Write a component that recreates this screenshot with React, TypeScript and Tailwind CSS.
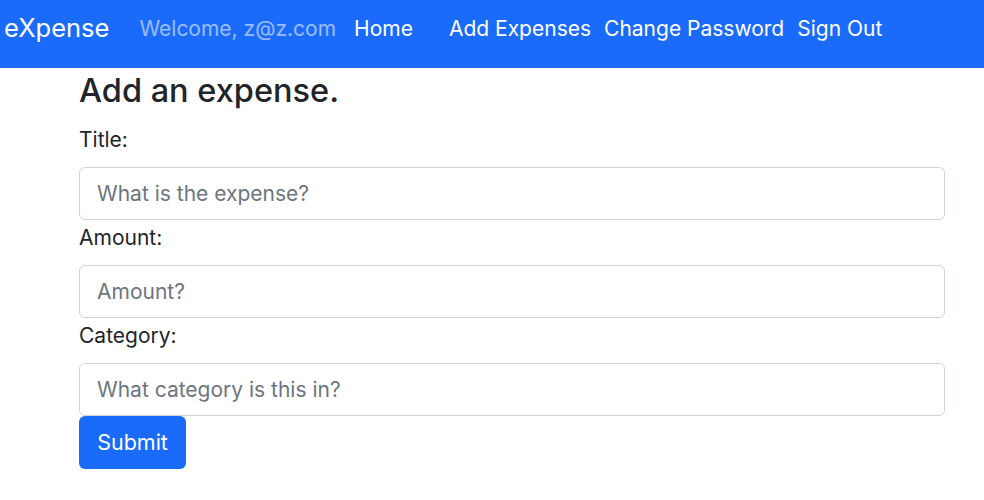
import React from "react";

const font = { fontFamily: "Inter, 'Noto Sans', sans-serif" };

function Field({ label, placeholder }: { label: string; placeholder: string }) {
  return (
    <div>
      <label className="block pt-[3px] text-[21px] leading-[30px] text-[#212529] mb-[12px]">{label}</label>
      <input
        className="block w-full h-[53px] rounded-[6px] border border-[#ced4da] bg-white px-[17px] text-[21px] text-[#212529] placeholder:text-[#6c757d] outline-none"
        placeholder={placeholder}
      />
    </div>
  );
}

export default function App() {
  return (
    <div className="min-h-[500px] bg-white" style={font}>
      <nav className="h-[68px] bg-[#1b6bfa] flex items-center pb-[11px]">
        <span className="ml-[4px] text-[25.5px] text-white">eXpense</span>
        <span className="ml-[30px] text-[21px] text-white/55">Welcome, z@z.com</span>
        <span className="ml-[18px] text-[21px] text-white">Home</span>
        <span className="ml-[36px] text-[21px] text-white">Add Expenses</span>
        <span className="ml-[13px] text-[21px] text-white">Change Password</span>
        <span className="ml-[13px] text-[21px] text-white">Sign Out</span>
      </nav>
      <div className="pl-[79px] pr-[39px]">
        <h1 className="mt-[4px] text-[32.5px] leading-[38px] text-[#212529] mb-[12px] font-medium">Add an expense.</h1>
        <Field label="Title:" placeholder="What is the expense?" />
        <Field label="Amount:" placeholder="Amount?" />
        <Field label="Category:" placeholder="What category is this in?" />
        <button className="h-[53px] w-[107px] rounded-[6px] bg-[#1b6bfa] text-white text-[21.5px]">Submit</button>
      </div>
    </div>
  );
}
